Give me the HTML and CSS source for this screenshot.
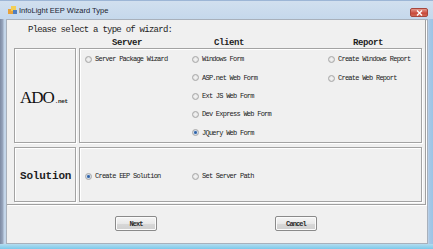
FILE: index.html
```html
<!DOCTYPE html>
<html lang="en">
<head>
    <meta charset="UTF-8">
    <title>InfoLight EEP Wizard Type</title>
    <link rel="stylesheet" href="styles.css">
</head>
<body>
    <div class="window">
        <div class="titlebar">
            <svg class="app-icon" width="9" height="8" viewBox="0 0 9 8">
                <rect x="0" y="3" width="5" height="5" fill="#e8a23a"/>
                <rect x="3" y="0" width="5" height="5" fill="#f3cf55"/>
                <rect x="5" y="4" width="4" height="4" fill="#4f7fc0"/>
            </svg>
            <span class="title">InfoLight EEP Wizard Type</span>
            <span class="close">
                <svg width="7" height="6" viewBox="0 0 7 6">
                    <path d="M1 0.5 L6 5.5 M6 0.5 L1 5.5" stroke="#fff" stroke-width="1.4"/>
                </svg>
            </span>
        </div>

        <div class="client">
            <div class="panel">
                <p class="prompt">Please select a type of wizard:</p>

                <div class="heads">
                    <span class="head-server">Server</span>
                    <span class="head-client">Client</span>
                    <span class="head-report">Report</span>
                </div>

                <div class="group group-ado">
                    <div class="label-box">
                        <span class="ado">ADO</span><span class="net">.net</span>
                    </div>
                    <div class="options">
                        <div class="col">
                            <label class="opt"><input type="radio" name="wizard">Server Package Wizard</label>
                        </div>
                        <div class="col">
                            <label class="opt"><input type="radio" name="wizard">Windows Form</label>
                            <label class="opt"><input type="radio" name="wizard">ASP.net Web Form</label>
                            <label class="opt"><input type="radio" name="wizard">Ext JS Web Form</label>
                            <label class="opt"><input type="radio" name="wizard">Dev Express Web Form</label>
                            <label class="opt"><input type="radio" name="wizard" checked>JQuery Web Form</label>
                        </div>
                        <div class="col">
                            <label class="opt"><input type="radio" name="wizard">Create Windows Report</label>
                            <label class="opt"><input type="radio" name="wizard">Create Web Report</label>
                        </div>
                    </div>
                </div>

                <div class="group group-solution">
                    <div class="label-box">
                        <span class="sol">Solution</span>
                    </div>
                    <div class="options">
                        <div class="col">
                            <label class="opt"><input type="radio" name="solution" checked>Create EEP Solution</label>
                        </div>
                        <div class="col">
                            <label class="opt"><input type="radio" name="solution">Set Server Path</label>
                        </div>
                    </div>
                </div>
            </div>

            <div class="buttons">
                <button>Next</button>
                <button>Cancel</button>
            </div>
        </div>
    </div>
</body>
</html>
```

FILE: styles.css
```css
body {
    margin: 0;
    overflow: hidden;
    background: #c9d9ea;
}

.window {
    width: 433px;
    height: 249px;
    background: linear-gradient(to right, #7d8aa3 0, #9aa8bf 3px, #c3d5e9 4px, #c3d5e9 428px, #a9c8e6 429px, #9cc4e6 100%);
    position: relative;
}

.window::after {
    content: "";
    position: absolute;
    left: 0;
    right: 0;
    bottom: 0;
    height: 5px;
    background: linear-gradient(to bottom, #b4dcef, #7cc9ea);
}

.titlebar {
    height: 19px;
    display: flex;
    align-items: center;
    padding-left: 8px;
    background: linear-gradient(to bottom, #d2e0ef, #c5d8ec);
    box-shadow: inset 0 1px 0 #9db6d6;
}

.app-icon {
    margin-top: 1px;
}

.title {
    font-family: "Liberation Sans", Arial, sans-serif;
    font-size: 7.5px;
    color: #1b2432;
    margin-left: 2px;
    margin-top: 1px;
}

.close {
    margin-left: auto;
    margin-right: 5px;
    margin-top: 6px;
    width: 18px;
    height: 9px;
    border-radius: 2px;
    background: linear-gradient(to bottom, #e49b8f, #c9493b 60%, #d06a55);
    border: 1px solid #a7463c;
    box-sizing: border-box;
    display: flex;
    align-items: center;
    justify-content: center;
}

.client {
    width: 422px;
    height: 225px;
    margin-left: 6px;
    box-sizing: border-box;
    border: 1px solid #a8b0bb;
    background: #f0f0f0;
    font-family: "Liberation Mono", "Courier New", monospace;
    color: #1f1f1f;
}

.panel {
    height: 185px;
    margin-right: 1px;
    box-sizing: border-box;
    border-right: 1px solid #a0a0a0;
    border-bottom: 1px solid #a0a0a0;
    box-shadow: 1px 1px 0 #fff;
    padding-left: 7px;
}

.prompt {
    margin: 0;
    padding: 5px 0 0 14px;
    font-size: 9px;
    line-height: 10px;
    letter-spacing: -0.75px;
}

.heads {
    display: grid;
    grid-template-columns: 72px 107px 136px 1fr;
    margin-top: 4px;
    height: 9px;
    font-size: 9px;
    line-height: 9px;
    font-weight: bold;
    letter-spacing: -0.4px;
}

.head-server {
    grid-column: 2;
    padding-left: 26px;
}

.head-client {
    padding-left: 21px;
}

.head-report {
    padding-left: 24px;
}

.group {
    display: flex;
    gap: 3px;
}

.group-ado {
    height: 95px;
}

.group-solution {
    height: 55px;
    margin-top: 4px;
}

.label-box,
.options {
    box-sizing: border-box;
    border: 1px solid #a3a3a3;
    box-shadow: inset 1px 1px 0 #fff, 1px 1px 0 #fff;
}

.label-box {
    width: 62px;
    display: flex;
    align-items: center;
    padding-left: 5px;
}

.ado {
    font-family: "Liberation Serif", "Times New Roman", serif;
    font-size: 17px;
    letter-spacing: -1px;
    color: #111;
    margin-top: 5px;
}

.net {
    font-size: 6px;
    font-weight: bold;
    letter-spacing: -0.4px;
    margin-top: 11px;
    margin-left: 1px;
}

.sol {
    font-size: 11px;
    font-weight: bold;
    letter-spacing: -0.2px;
    margin-top: 2px;
}

.options {
    width: 343px;
    display: flex;
    padding: 1px 0 0 5px;
}

.group-solution .options {
    align-items: center;
    padding-top: 3px;
}

.col {
    display: flex;
    flex-direction: column;
}

.col:nth-child(1) {
    width: 107px;
}

.col:nth-child(2) {
    width: 136px;
}

.opt {
    height: 18.75px;
    display: flex;
    align-items: center;
    font-size: 7px;
    letter-spacing: -0.75px;
    color: #1a1a1a;
    white-space: nowrap;
}

.opt input {
    appearance: none;
    -webkit-appearance: none;
    width: 7px;
    height: 7px;
    margin: 0 3px 0 0;
    border-radius: 50%;
    border: 1px solid #a7a7a7;
    box-sizing: border-box;
    background: radial-gradient(circle, #f2f2f2 20%, #d4d4d4 100%);
}

.opt input:checked {
    background: radial-gradient(circle, #2d5d9e 0, #3e72b5 35%, #cfd9e6 50%, #e6e6e6 100%);
}

.buttons {
    display: flex;
    gap: 118px;
    padding: 11px 0 0 108px;
}

button {
    width: 42px;
    height: 15px;
    padding: 0;
    border: 1px solid #8a8a8a;
    border-radius: 2px;
    background: linear-gradient(to bottom, #f6f6f6, #e8e8e8 50%, #d8d8d8 51%, #cfcfcf);
    box-shadow: inset 0 0 0 1px #fbfbfb;
    font-family: "Liberation Mono", "Courier New", monospace;
    font-size: 7px;
    font-weight: bold;
    letter-spacing: -0.9px;
    color: #2a2a2a;
}
```
